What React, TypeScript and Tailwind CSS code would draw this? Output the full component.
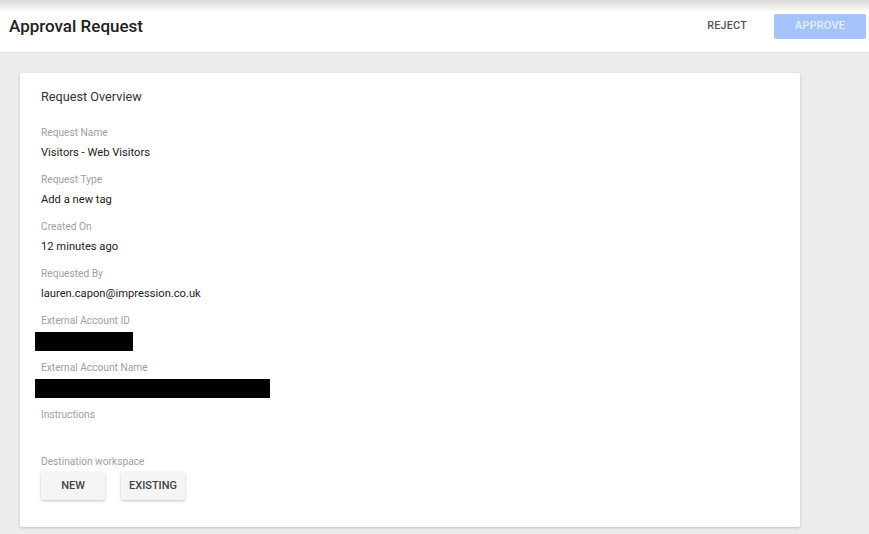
const Field = ({ label, value }: { label: string; value?: string }) => (
  <div className="mb-[11px]">
    <div className="text-[10.2px] leading-4 text-[#9e9e9e]">{label}</div>
    <div className="mt-1 h-4 text-[11.2px] leading-4 text-[#212121]">{value}</div>
  </div>
);

const Redacted = ({ label, width }: { label: string; width: string }) => (
  <div className="mb-[9px]">
    <div className="text-[10.2px] leading-4 text-[#9e9e9e]">{label}</div>
    <div className={`mt-[3px] -ml-[6px] h-[19px] bg-black ${width}`} />
  </div>
);

const App = () => {
  return (
    <div className="min-h-screen bg-[#ececec] font-['Roboto',sans-serif]">
      <header className="flex h-[53px] items-center justify-between border-b border-[#e2e2e2] bg-linear-to-b from-[#d9d9d9] via-white via-[24%] to-white pl-[9px] pr-[3px]">
        <h1 className="mt-[2px] text-[17px] font-medium text-[#212121]">Approval Request</h1>
        <div className="flex items-center">
          <button className="mr-[27px] text-[10.8px] font-medium tracking-[0.2px] text-[#555]">REJECT</button>
          <button className="h-[25px] w-[92px] rounded-[2px] bg-[#a3c3fa] text-[11px] font-medium tracking-[0.2px] text-[#e6eefd]">
            APPROVE
          </button>
        </div>
      </header>

      <main className="pl-[20px] pt-[20px]">
        <section className="w-[780px] rounded-[2px] bg-white pb-[27px] pl-[21px] pt-[14px] shadow-[0_1px_3px_rgba(0,0,0,0.2)]">
          <h2 className="text-[12.7px] leading-5 text-[#333]">Request Overview</h2>
          <div className="mt-[18px]">
            <Field label="Request Name" value="Visitors - Web Visitors" />
            <Field label="Request Type" value="Add a new tag" />
            <Field label="Created On" value="12 minutes ago" />
            <Field label="Requested By" value="lauren.capon@impression.co.uk" />
            <Redacted label="External Account ID" width="w-[98px]" />
            <Redacted label="External Account Name" width="w-[235px]" />
            <Field label="Instructions" />
            <div className="text-[10.2px] leading-4 text-[#9e9e9e]">Destination workspace</div>
            <div className="mt-[2px] flex gap-4">
              <button className="h-[28px] w-[64px] rounded-[2px] bg-[#f5f5f5] text-[11px] font-medium text-[#424242] shadow-[0_1px_3px_rgba(0,0,0,0.25)]">
                NEW
              </button>
              <button className="h-[28px] w-[64px] rounded-[2px] bg-[#f5f5f5] text-[11px] font-medium text-[#424242] shadow-[0_1px_3px_rgba(0,0,0,0.25)]">
                EXISTING
              </button>
            </div>
          </div>
        </section>
      </main>
    </div>
  );
};

export default App;
